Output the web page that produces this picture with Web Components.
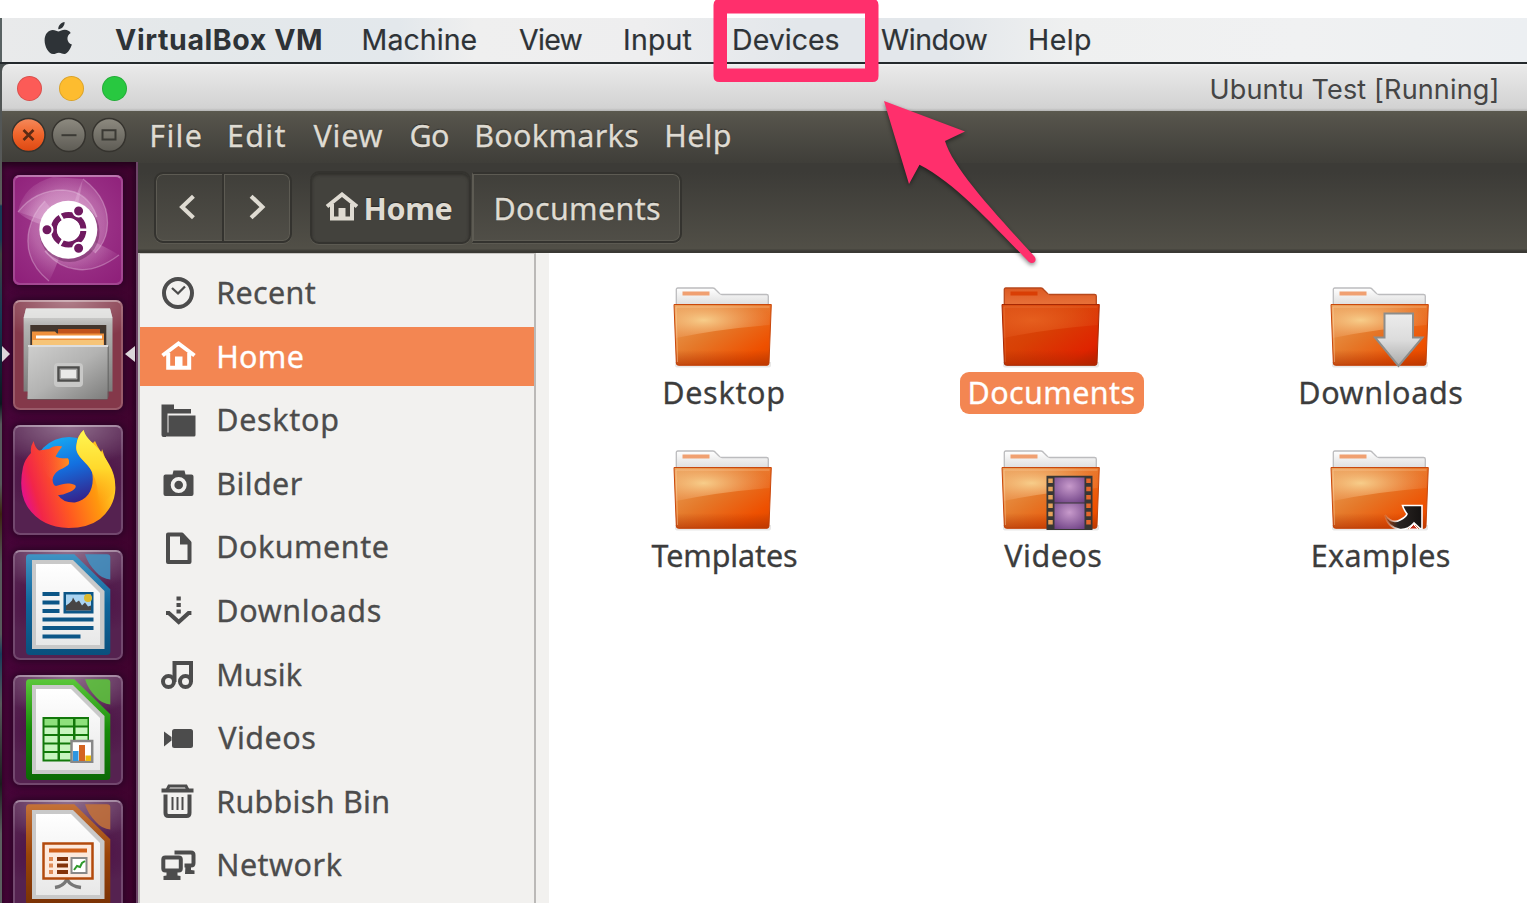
<!DOCTYPE html>
<html lang="en">
<head>
<meta charset="utf-8">
<title>Ubuntu Test [Running]</title>
<style>
html,body{margin:0;height:100%;overflow:hidden;background:#fff}
</style>
</head>
<body>
<desktop-screen></desktop-screen>
<script>
const define = (name, html, setup) => customElements.define(name, class extends HTMLElement {
  connectedCallback() {
    if (this.shadowRoot) return;
    const root = this.attachShadow({ mode: 'open' });
    const t = document.createElement('template');
    t.innerHTML = typeof html === 'function' ? html(this) : html;
    root.appendChild(t.content.cloneNode(true));
    if (setup) setup(this, root);
  }
});

/* A one-line label whose box is exactly its ink width; w gives that width. */
const ctx = document.createElement('canvas').getContext('2d');
define('fit-text', `<style>:host{display:block;flex:none;white-space:nowrap}span{display:block}</style><span><slot></slot></span>`, (el, root) => {
  const cs = getComputedStyle(el), text = el.textContent, w = +el.getAttribute('w');
  ctx.font = `${cs.fontWeight} ${cs.fontSize} ${cs.fontFamily}`;
  const m = ctx.measureText(text);
  const ink = m.actualBoundingBoxLeft + m.actualBoundingBoxRight;
  el.style.width = w + 'px';
  const s = root.querySelector('span').style;
  s.letterSpacing = ((w - ink) / (text.length - 1)) + 'px';
  s.marginLeft = m.actualBoundingBoxLeft + 'px';
});

define('mac-menu-bar', `<style>
:host{display:flex;align-items:center;height:44px;box-sizing:border-box;padding:0 0 1px 42px;gap:42.500px;
 background:linear-gradient(90deg,#e9eaeb 0,#e4e8ea 12%,#e3e8ec 26%,#efefef 31%,#eeeeef 42%,#e3e7eb 52%,#e3e7eb 62%,#eff0f0 70%,#f0f1f2 85%,#eceff2 100%);
 color:#2e3337;font:28.5px/43px Inter,sans-serif;-webkit-text-stroke:.2px #2e3337}
svg{width:29px;height:34px;margin:-2px -.400px 0 0;flex:none}
b{font-weight:700;-webkit-text-stroke:0}
</style>
<svg viewBox="0 0 29 34"><path fill="#2e3337" d="M20.600 0c.3 3.700-2.900 7.400-6.300 7.200C13.900 3.800 17.200.4 20.600 0ZM14.700 9.400C16.300 9.400 18.200 7.700 20.900 7.800c2.600.1 4.600 1.300 5.800 3.100-4.900 3-4.100 9.600 1.200 11.700-1.400 4-4.300 9.300-7.400 9.400-2.200.1-2.900-1.300-5.600-1.300-2.700 0-3.500 1.300-5.600 1.400C4.700 32.300.6 24.700.6 18.300c0-6.700 4.200-10.200 8.100-10.300 2.500 0 4.500 1.400 6 1.400Z"/></svg>
<b><fit-text w="206">VirtualBox VM</fit-text></b><fit-text w="113">Machine</fit-text><fit-text w="63.500">View</fit-text><fit-text w="66.500">Input</fit-text><fit-text w="104.500">Devices</fit-text><fit-text w="106.500">Window</fit-text><fit-text w="60">Help</fit-text>`);

define('mac-title-bar', `<style>
:host{display:flex;align-items:center;height:47px;box-sizing:border-box;padding:0 30.5px 0 15px;border-radius:7px 0 0 0;
 background:linear-gradient(#f3f3f3 0,#e9e9e9 6%,#d2d2d2 94%,#b5b5b5 100%);font:27px/47px Inter,sans-serif;color:#454545}
i{width:25px;height:25px;border-radius:50%;box-sizing:border-box;margin:1px 17.400px 0 0;border:1px solid #0002}
fit-text{margin-left:auto;padding-top:3px}
</style><i style="background:#fc5b57"></i><i style="background:#fdbc2f"></i><i style="background:#28c840"></i><fit-text w="285">Ubuntu Test [Running]</fit-text>`);

define('app-menu-bar', `<style>
:host{display:flex;align-items:center;height:52px;box-sizing:border-box;padding:0 0 3px 10px;gap:28.100px;
 background:linear-gradient(#5b594e 0,#54524a 15%,#3f3e39 100%);font:30.5px/49px "Noto Sans",sans-serif;color:#dfdbd2;-webkit-text-stroke:.3px;text-shadow:0 -1px 1px #2a2925}
svg{width:118px;height:36px;flex:none;margin:-1px -6.800px 0 0}
</style>
<svg viewBox="0 0 118 36"><defs><linearGradient id="o" x2="0" y2="1"><stop stop-color="#f58a5c"/><stop offset=".5" stop-color="#f0642a"/><stop offset="1" stop-color="#dd4812"/></linearGradient><linearGradient id="g" x2="0" y2="1"><stop stop-color="#8d8a80"/><stop offset="1" stop-color="#5d5b54"/></linearGradient></defs>
<g stroke="#35332e" stroke-width="1.500"><circle cx="16.500" cy="18" r="16.500" fill="url(#o)"/><circle cx="56.800" cy="18" r="16.500" fill="url(#g)"/><circle cx="97.100" cy="18" r="16.500" fill="url(#g)"/></g>
<g fill="none" stroke="#3b3a35" stroke-width="2"><path d="m11.500 13 10 10m0-10-10 10" stroke="#5c2a14" stroke-width="2.600"/><path d="M49.500 18.200h15"/><path d="M90.500 13.300h13v9.200h-13z"/></g></svg>
<fit-text w="49.500">File</fit-text><fit-text w="56.500">Edit</fit-text><fit-text w="69">View</fit-text><fit-text w="37.500">Go</fit-text><fit-text w="162">Bookmarks</fit-text><fit-text w="64.500">Help</fit-text>`);

define('nav-toolbar', `<style>
:host{display:flex;align-items:center;height:90px;box-sizing:border-box;padding:0 0 1px 16px;
 background:linear-gradient(#3c3b37 0,#3c3b37 10%,#514f47 95%,#3a3934 98%);
 font:30.5px/70px "Noto Sans",sans-serif;color:#dfdbd2;text-shadow:0 -1px 1px #2a2925}
.b{display:flex;height:71px;box-sizing:border-box;border:2px solid #34332f;border-radius:9px;background:linear-gradient(#403f3a,#504e47);box-shadow:inset 0 0 0 1px #5d5b53,0 1px 0 #5c5a52}
.nav{width:138px;margin-right:17.5px}
.nav svg{flex:1;width:67px;height:67px}.nav svg+svg{border-left:2px solid #34332f;box-shadow:inset 1px 0 #5d5b53}
.home{width:161px;height:73px;align-items:center;gap:6.500px;padding-left:13.500px;background:#43423d;box-shadow:inset 0 2px 3px #302f2b,0 1px 0 #5c5a52;font-weight:700}
.home svg{width:34px;height:29px;margin-top:-3px}
.doc{width:210px;margin-left:1px;padding-left:23px;border-left:1px solid #5d5b53;border-radius:0 9px 9px 0;-webkit-text-stroke:.3px}
fit-text{line-height:68px}.home fit-text{line-height:70px}
</style>
<div class="b nav"><svg viewBox="0 0 67 67"><path d="M38 22 26.500 33 38 44" fill="none" stroke="#dfdbd2" stroke-width="4.200"/></svg><svg viewBox="0 0 67 67"><path d="m27.500 22 11.500 11-11.500 11" fill="none" stroke="#dfdbd2" stroke-width="4.200"/></svg></div>
<div class="b home"><svg viewBox="0 0 34 29"><path d="M2 14.500 17 2.500l15 12M7 12v14.500h20V12" fill="none" stroke="#dfdbd2" stroke-width="4"/><path fill="#dfdbd2" d="M13.500 16h7v11h-7z"/></svg><fit-text w="86">Home</fit-text></div>
<div class="b doc"><fit-text w="164.500">Documents</fit-text></div>`);

/* Launcher */
const office = (c1, c2, c3, body) => `<defs><linearGradient id="f" x2="0" y2="1"><stop stop-color="${c1}"/><stop offset=".5" stop-color="${c2}"/><stop offset="1" stop-color="${c3}"/></linearGradient><linearGradient id="p" x2="0" y2="1"><stop stop-color="#fff"/><stop offset="1" stop-color="#e8e8e8"/></linearGradient></defs>
<path fill="url(#f)" d="M16 4.300h45.300l36 35V102q0 3-4 3H17q-4 0-4-4V8q0-3.700 3-3.700Z"/><path fill="${c1}" opacity=".85" d="M72 4.300h22q3.300 0 3.300 3V29.500Q89 29 83 22 75 14 72 4.300Z"/>
<path fill="#c9c9c9" d="M19 10h41l31.500 31v58H19z"/><path fill="url(#p)" d="M23 14h35l29 29v52H23z"/>${body}`;
const ART = {
dash: `<defs><radialGradient id="a" cx=".5" cy=".45" r=".75"><stop stop-color="#a8408f"/><stop offset=".55" stop-color="#972d83"/><stop offset="1" stop-color="#8d1d78"/></radialGradient><radialGradient id="s" gradientUnits="userSpaceOnUse" cx="55" cy="50" r="60"><stop stop-color="#e9c3e2" stop-opacity=".6"/><stop offset=".6" stop-color="#e2b0d8" stop-opacity=".38"/><stop offset="1" stop-color="#d79aca" stop-opacity=".05"/></radialGradient></defs>
<rect width="110" height="110" rx="6" fill="url(#a)"/>
<g fill="url(#s)"><path d="M5 37Q22 15 50 15 75 16 84 42L55 55Q18 50 5 37Z"/><path d="M70 4Q98 25 94 55 92 68 82 78L55 55Q62 20 70 4Z"/><path d="M106 80Q82 98 62 94 45 92 32 76L55 55Q90 70 106 80Z"/><path d="M36 106Q10 85 16 55 20 38 32 26L55 55Q45 90 36 106Z"/><path d="M5 37Q10 10 40 2L70 4 60 55Z"/></g>
<g fill="none" stroke="#efd0e9" stroke-opacity=".35" stroke-width="1.300"><path d="M5 37Q22 15 50 15 75 16 84 42"/><path d="M70 4Q98 25 94 55 92 68 82 78"/><path d="M106 80Q82 98 62 94 45 92 32 76"/><path d="M36 106Q10 85 16 55 20 38 32 26"/></g>
<circle cx="56.500" cy="57" r="30" fill="#4b0c40" opacity=".35"/><circle cx="55.300" cy="54.700" r="29" fill="#fff"/>
<circle cx="55.600" cy="54.700" r="14.800" fill="none" stroke="#701a60" stroke-width="6"/>
<g stroke="#fff" stroke-width="2.500"><path d="M55.600 54.700H76M55.600 54.700 45 36.400M55.600 54.700 45 73"/></g><circle cx="55.600" cy="54.700" r="11.500" fill="#fff"/>
<g fill="#701a60" stroke="#fff" stroke-width="2"><circle cx="34" cy="54.700" r="5.500"/><circle cx="65.600" cy="36" r="5.500"/><circle cx="65.600" cy="73.300" r="5.500"/></g>`,
files: `<defs><linearGradient id="b" x2="0" y2="1"><stop stop-color="#e0e0df"/><stop offset=".2" stop-color="#b4b4b3"/><stop offset="1" stop-color="#7c7c7b"/></linearGradient><linearGradient id="d" x2="1" y2="1"><stop stop-color="#cfcfce"/><stop offset=".5" stop-color="#b3b3b2"/><stop offset="1" stop-color="#7d7d7c"/></linearGradient></defs>
<path fill="url(#b)" d="M13 8.500h84l2.500 9v74H10.600v-74z"/><path fill="#e6e6e5" opacity=".8" d="M13 8.500h84l2.300 9.500H10.800z"/>
<path fill="#42362e" d="M17.300 25h76v21h-76z"/><path fill="#c1531c" d="M45 29h42v16H45z"/><path fill="#f0913d" d="M19 31.500h23l2 2h47v12H19z"/><path fill="#fff" d="M23 35.500h66v3H23z"/><path fill="#f6c478" d="M19.500 40h71v6h-71z"/>
<path fill="#5d5d5c" d="M96 46v50l-2 4H15l-2-3z" opacity=".6"/><path fill="url(#d)" d="M15.500 45h79v54h-80z"/><path stroke="#dedede" stroke-width="2" d="M15 46h80"/>
<rect x="41" y="63" width="29" height="24" rx="4" fill="#c8c8c7"/><rect x="45.500" y="67.500" width="20" height="13" fill="#e9e9e8" stroke="#4d4d4c" stroke-width="2.500"/><rect x="47.500" y="69.500" width="16" height="9" fill="none" stroke="#a9a9a8" stroke-width="1"/>`,
firefox: `<defs><linearGradient id="bl" x2=".3" y2="1"><stop stop-color="#18b5f5"/><stop offset=".5" stop-color="#1370e0"/><stop offset="1" stop-color="#35218a"/></linearGradient><linearGradient id="fx" x1="0" y1=".65" x2="1" y2=".35"><stop stop-color="#e3108f"/><stop offset=".14" stop-color="#f22648"/><stop offset=".42" stop-color="#ff5a20"/><stop offset=".72" stop-color="#ff980e"/><stop offset="1" stop-color="#ffe32e"/></linearGradient><linearGradient id="yl" x2="0" y2="1"><stop stop-color="#fff652"/><stop offset=".5" stop-color="#ffd92c"/><stop offset="1" stop-color="#ff9a10" stop-opacity="0"/></linearGradient><linearGradient id="fc" x2="1"><stop stop-color="#f5334b" stop-opacity="0"/><stop offset="1" stop-color="#ff9020"/></linearGradient></defs>
<circle cx="56" cy="48" r="36" fill="url(#bl)"/>
<path fill="url(#fx)" d="M20.600 16Q22 23 26 25.500L36 24q5-4 13-2.500-4 5-6.500 10 4 2.500 12.500 2 2 4 0 6.500-4 3-9 5-6 4-6.500 9.500Q40 61 43 61c8-2 11-4 19-1 3 3-4 7-8 8q-5 2.500-9 2Q50 78 62 77.500C76 75 82 62 79 47 76 38 62 32 63.300 21Q64 11 70.600 5 72 14 80 18l2-2q2 5 6 11 1-1 1-3 2 7 6 15 9 14 7 29-2 15-15 26Q75 103 55.600 103 27 102 14 81 5 66 10 42q2-8 8-14-1-6 2.600-12Z"/>
<path fill="url(#yl)" d="M70.600 5C73 14 81 18 88 27 98 41 105 52 101 68L86 82Q86 60 79 47C76 38 62 32 63.300 21Q64 11 70.600 5Z"/>
<path fill="url(#fc)" d="M26 25.500 36 24q5-4 13-2.500-4 5-6.500 10 4 2.500 12.500 2 2 4 0 6.500-4 3-9 5-6 4-6.500 9.500Q30 50 26 25.500Z"/>`,
writer: office('#3f94c4', '#0f659b', '#0a507d', `<g fill="#0c5687"><path d="M29.500 42h17v4h-17zm0 8.500h17v4h-17zm0 8.500h17v4h-17zm0 8.500h51v4h-51zm0 8.500h51v4h-51zm0 8.500h38v4h-38zM50.500 42h30v21.500h-30z"/></g><path fill="#a9d4f2" d="M53 44.500h25v16H53z"/><circle cx="75" cy="48" r="4" fill="#dcb92d"/><path fill="#474544" d="M53 60.500v-5l3-2 3-3 1-3 3 5 3-2 3 5 3-3 3 4 3-1v5z"/>`),
calc: office('#5bc83a', '#178b0a', '#0b6905', `<path fill="#12780a" d="M29.500 42H76v44.500H29.500z"/><path fill="#8ee07c" d="M31.500 44h13v6.500h-13zm15.500 0h13v6.500H47zm15.500 0h12v6.500h-12z"/><path fill="#c8f5bf" d="M31.500 52.500h13V59h-13zm15.500 0h13V59H47zm15.500 0h12V59h-12zM31.500 61h13v6.500h-13zM47 61h13v6.500H47zm15.500 0h12v6.500h-12zM31.500 69.500h13V76h-13zm15.500 0h13V76H47zM31.500 78h13v6.500h-13zM47 78h13v6.500H47z"/><path fill="#fff" stroke="#888" stroke-width="2.500" d="M58.500 66h20.700v20.700H58.500z"/><path fill="#2f96e0" d="M60 76h5.500v10H60z"/><path fill="#d36422" d="M66 70h6v16h-6z"/><path fill="#edb90e" d="M72.500 80.500h5.500V86h-5.500z"/>`),
impress: office('#c47238', '#9a4408', '#7a3205', `<g fill="none" stroke="#777" stroke-width="3.500"><path d="M42 87.500q8-1 12-8 4 7 14 8"/></g><path fill="#fde9dc" stroke="#b24a0c" stroke-width="2.500" d="M30.500 43.500h49v35h-49z"/><path fill="#d0601a" d="M36 48.500h38v4H36z"/><path fill="#e08a55" d="M36 57h4v4h-4zm0 6.500h4v4h-4zm0 6.500h4v4h-4z"/><path fill="#83330a" d="M44 57h11v4H44zm0 6.500h11v4H44zm0 6.500h11v4H44z"/><path fill="#fff" stroke="#888" stroke-width="2" d="M58.500 58h15v15h-15z"/><path fill="none" stroke="#2f9a2b" stroke-width="2" d="m61 70 3-4 3 1 2-4 3-2"/>`)
};
define('launcher-tile', el => {
  const k = el.getAttribute('art'), bg = k === 'files' ? '#84384a' : k === 'dash' ? '#96308a' : '#552250';
  return `<style>:host{display:block;flex:none;width:110px;height:110px;border-radius:7px;position:relative;background:${bg};box-shadow:0 0 7px 2px #2a0425}
svg{display:block;width:110px;height:110px}
:host::before{content:"";position:absolute;inset:0;border-radius:7px;background:radial-gradient(ellipse 80px 42px at 50% 0,#ffffff5c,#fff0)${k === 'dash' || k === 'files' ? '' : ',radial-gradient(ellipse 75px 34px at 50% 48%,#4a0c42,#4a0c4200)'}}
:host::after{content:"";position:absolute;inset:0;border-radius:7px;border:2px solid #ffffff2c;border-top-color:#ffffff60;box-sizing:border-box}
svg{position:relative}
.m{position:absolute;top:46px;border:8px solid transparent}.l{left:-11px;border-left-color:#dcd6da;border-right:0}.r{right:-12px;border-right:10px solid #dcd6da;border-left:0}
</style><svg viewBox="0 0 110 110">${ART[k]}</svg>${k === 'files' ? '<span class="m l"></span><span class="m r"></span>' : ''}`;
});
define('unity-launcher', `<style>:host{display:flex;flex-direction:column;gap:15px;width:136px;height:741px;overflow:hidden;box-sizing:border-box;padding:13px 0 0 11px;border-right:2px solid #6d4568;background:linear-gradient(90deg,#470539,#40042f 96%,#37032c);box-shadow:inset 0 4px 6px #23021c}</style>
${['dash','files','firefox','writer','calc','impress'].map(a => `<launcher-tile art="${a}"></launcher-tile>`).join('')}`);

/* Sidebar */
const SIDE = {
recent: '<circle cx="17" cy="17" r="14" fill="none" stroke="currentColor" stroke-width="4"/><path fill="none" stroke="currentColor" stroke-width="2.300" d="m11 12 6 5.500 7-7"/>',
home: '<path d="M1.500 14.500 17.500 2.500l16 12M7.200 12v14.700h21V12" fill="none" stroke="currentColor" stroke-width="4"/><path fill="currentColor" d="M14 15.500h7.500V28H14z"/>',
desktop: '<path fill="currentColor" d="M.5 1.500h12.500V6h17v4.500H6.500V30H5V34H2.500Q.5 34 .5 32z"/><path fill="currentColor" d="M7.500 12.500h27V32q0 1.500-1.500 1.500H3v-4h4.500z"/>',
bilder: '<path fill="currentColor" fill-rule="evenodd" d="M4.500 8.500h7l1-4h11l1 4h6q2 0 2 2V28q0 2-2 2h-26q-2 0-2-2V10.500q0-2 2-2ZM17.700 11a8 8 0 1 0 0 16 8 8 0 0 0 0-16Z"/><circle cx="17.700" cy="19" r="4.300" fill="currentColor"/>',
dokumente: '<path fill="none" stroke="currentColor" stroke-width="4" stroke-linejoin="round" d="M7 4.500h14l7.500 8V32H7z"/><path fill="currentColor" d="M19 4.500h3l7.500 8v2H19z"/>',
downloads: '<path fill="currentColor" d="M15.500 2.500h4.300v4h-4.300zm0 6.500h4.300v4h-4.300zm0 6.500h4.300v4h-4.300z"/><path fill="none" stroke="currentColor" stroke-width="4.200" d="M5 19h2.800l9.900 9 9.900-9h2.800"/>',
musik: '<g fill="none" stroke="currentColor" stroke-width="4"><circle cx="7.500" cy="24.500" r="5.500"/><circle cx="24.500" cy="24.500" r="5.500"/><path d="M13.500 25V6H30v19"/></g>',
videos: '<path fill="currentColor" d="M3 10.500 10.500 16v3.500L3 25.500z"/><rect x="11" y="8" width="21" height="19" rx="2.500" fill="currentColor"/>',
bin: '<path fill="none" stroke="currentColor" stroke-width="4" d="M.5 6.500h32"/><path fill="none" stroke="currentColor" stroke-width="3" d="M6 6l2-4h17l2 4"/><path fill="none" stroke="currentColor" stroke-width="4" d="M4.500 10.500V29q0 3 3 3h18q3 0 3-3V10.500"/><path stroke="currentColor" stroke-width="2" d="M11.500 13v13m5-13v13m5-13v13"/>',
network: '<rect x="2.300" y="9.500" width="17.500" height="13" rx="2" fill="none" stroke="currentColor" stroke-width="4"/><path fill="currentColor" d="M5.500 24h11v3.500l3 .5v4h-17v-4l3-.5zM24.500 17H30v5l3.500.5V26H24z"/><path fill="none" stroke="currentColor" stroke-width="4" d="M13.500 4.500H30q2.500 0 2.500 2.500v8q0 2.500-2.500 2.500h-6.500"/>'
};
define('place-row', el => `<style>:host{display:flex;align-items:center;box-sizing:border-box;height:59px;margin-bottom:4.600px;padding:0 0 0 20.500px;gap:22.700px;color:#4c4c4c;line-height:58px;-webkit-text-stroke:.3px}
:host([selected]){background:#f38652;color:#fff}svg{width:35px;height:35px;flex:none;-webkit-text-stroke:0;margin-bottom:${el.getAttribute('icon') === 'home' ? -4 : 0}px}div{margin-top:-2.400px}</style><svg viewBox="0 0 35 35">${SIDE[el.getAttribute('icon')]}</svg><div><slot></slot></div>`);
define('places-sidebar', `<style>:host{display:block;width:398px;height:650px;overflow:hidden;box-sizing:border-box;padding-top:9.700px;background:#f2f1ef;border-left:2px solid #bdb9b8;border-right:2px solid #bbb9b7;border-top:1px solid #c8c6c3;font:30.5px "Noto Sans",sans-serif}</style>
${[['recent','Recent',97.5],['home','Home',84.5],['desktop','Desktop',120],['bilder','Bilder',84.5],['dokumente','Dokumente',169.5],['downloads','Downloads',162.5],['musik','Musik',84.5],['videos','Videos',97],['bin','Rubbish Bin',170],['network','Network',124.5]].map(([i, t, w]) => `<place-row icon="${i}"${i === 'home' ? ' selected' : ''}><fit-text w="${w}">${t}</fit-text></place-row>`).join('')}`);

/* Folder grid */
const EMBLEM = {
down: '<defs><linearGradient id="dn" x2="0" y2="1"><stop stop-color="#ececec"/><stop offset=".5" stop-color="#dcdcdc"/><stop offset="1" stop-color="#aaa"/></linearGradient></defs><path fill="url(#dn)" stroke="#8d8d8b" stroke-width="2" d="M54.500 27.500h28.500V51.500h9.500L68.500 80 45 51.500h9.500z"/>',
film: '<defs><radialGradient id="fm" cx=".5" cy=".35" r=".8"><stop stop-color="#c79acb"/><stop offset="1" stop-color="#6c3f83"/></radialGradient></defs><path fill="#383735" d="M45.500 26.700h46V81h-46z"/><path fill="url(#fm)" d="M53.500 28.500h30v25h-30z"/><path fill="url(#fm)" d="M53.500 54.500h30V80h-30z"/><path stroke="#e5a35c" stroke-width="4.500" stroke-dasharray="4.500 3.800" d="M49.500 29.500V79"/><path stroke="#e4672c" stroke-width="4.500" stroke-dasharray="4.500 3.800" d="M87.500 29.500V79"/>',
link: '<defs><linearGradient id="lk"><stop stop-color="#2a2523" stop-opacity=".2"/><stop offset=".35" stop-color="#2a2523"/><stop offset="1" stop-color="#151211"/></linearGradient><linearGradient id="lw"><stop stop-color="#fff" stop-opacity=".1"/><stop offset=".4" stop-color="#fff"/></linearGradient></defs><path fill="url(#lk)" stroke="url(#lw)" stroke-width="1.600" d="M72.500 56.500H92V79.500H90L84 74Q78 81 70 80.500 57 78 55 66 62 75.500 70 71 76 68 77 65 74 61 72.500 56.500Z"/><path fill="#c52d16" stroke="#fff" d="m79 80 4.500-4.500L88 80z"/>'
};
define('folder-item', el => {
  const sel = el.hasAttribute('selected'), e = el.getAttribute('emblem');
  return `<style>:host{display:flex;flex-direction:column;align-items:center;color:#3c3c3c;line-height:40.500px;-webkit-text-stroke:.3px}svg{display:block;width:100px;height:82px;-webkit-text-stroke:0}
.n{margin:4px 0 0 3px;height:42px;box-sizing:border-box;padding:0 9.500px;border-radius:9px}:host([selected]) .n{background:#f38652;color:#fff;margin-left:1.500px}</style>
<svg viewBox="0 0 100 82"><defs><linearGradient id="m" x2="1" y2=".9"><stop stop-color="${sel ? '#d94f12' : '#e8a45c'}"/><stop offset=".45" stop-color="${sel ? '#d84005' : '#e5792a'}"/><stop offset=".85" stop-color="${sel ? '#df2400' : '#ee5000'}"/><stop offset="1" stop-color="${sel ? '#c51e00' : '#de4a00'}"/></linearGradient><radialGradient id="h" cx=".3" cy=".45" r=".7"><stop stop-color="${sel ? '#e6601f' : '#f8d18e'}" stop-opacity=".95"/><stop offset="1" stop-color="${sel ? '#e55a20' : '#f09a60'}" stop-opacity=".2"/></radialGradient><linearGradient id="t" x2="0" y2="1"><stop stop-color="${sel ? '#dd5a22' : '#fff'}"/><stop offset="1" stop-color="${sel ? '#e8733c' : '#dcdcdc'}"/></linearGradient><linearGradient id="bt" x2="0" y2="1"><stop offset=".75" stop-color="#a62a00" stop-opacity="0"/><stop offset="1" stop-color="#a62a00" stop-opacity=".55"/></linearGradient></defs>
<path fill="#00000018" d="M2 76h96v3.500q0 2-3 2H5q-3 0-3-2z"/>
<path fill="url(#t)" stroke="${sel ? '#b8481c' : '#bcbcbe'}" stroke-width="1.300" d="M3.300 20V3.500q0-1.500 1.500-1.500H40q1.500 0 3 2l3 3q1 1.500 3 1.500h44.500q1.800 0 1.800 1.500V20z"/>
<path stroke="${sel ? '#d93e05' : '#f0a071'}" stroke-width="4" d="M9.500 7.500h27"/>
<path fill="url(#m)" stroke="${sel ? '#a72803' : '#c9480c'}" d="M1 18.500h97.300L96 77q0 2.300-2 2.300H5.500Q3.300 79.300 3.300 77z"/>
<path fill="url(#h)" d="M2 19.500h95.300L96.500 39Q45 43 3 52z"/><path fill="url(#bt)" d="M1 18.500h97.300L96 77q0 2.300-2 2.300H5.500Q3.300 79.300 3.300 77z"/><path fill="none" stroke="#ffd5ab" stroke-opacity="${sel ? .15 : .45}" d="m4.500 76-1.500-55h93.500"/>${e ? EMBLEM[e] : ''}</svg><div class="n"><slot></slot></div>`;
});
define('folder-view', `<style>:host{display:grid;flex:1;box-sizing:border-box;height:650px;border-left:13px solid #f2f1ef;padding:33px 0 0 9.500px;grid-template-columns:repeat(3,328.500px);grid-auto-rows:163px;align-content:start;background:#fff;font:30.5px "Noto Sans",sans-serif;overflow:hidden}</style>
<folder-item><fit-text w="120">Desktop</fit-text></folder-item><folder-item selected><fit-text w="165">Documents</fit-text></folder-item><folder-item emblem="down"><fit-text w="162">Downloads</fit-text></folder-item>
<folder-item><fit-text w="145.500">Templates</fit-text></folder-item><folder-item emblem="film"><fit-text w="97">Videos</fit-text></folder-item><folder-item emblem="link"><fit-text w="137">Examples</fit-text></folder-item>`);

/* Pink frame and arrow laid over the page */
define('callout-marks', `<style>:host{position:absolute;inset:0;pointer-events:none}svg{display:block;width:1527px;height:903px}</style>
<svg viewBox="0 0 1527 903"><path fill="#ff2f6c" fill-rule="evenodd" d="M719.500-1H872.500q6 0 6 6V76q0 6-6 6H719.500q-6 0-6-6V5q0-6 6-6ZM727 13.500V68.500H865V13.500Z"/>
<path style="filter:drop-shadow(0 2px 2px #0007)" fill="#ff2f6c" d="M884 101 965 131.500 945 141C953 168 993 211 1034.500 256.500 1038 261 1032.500 266 1028 261 990 222 955 183 919.500 164.700L909 184Z"/></svg>`);

define('desktop-screen', `<style>
:host{display:flex;flex-direction:column;position:relative;width:1527px;height:903px;overflow:hidden;background:#fff;padding-top:18px;box-sizing:border-box}
.win{display:flex;flex-direction:column;border-top:2px solid #24292c;flex:none;padding-left:2px;background:linear-gradient(#4d5353 0,#5b5b5a 140px,#173a55 142px,#173a55 175px,#3f4240 190px,#173a55 250px,#0b171e 340px,#57595b 360px,#57595b 420px,#3b2411 450px,#57595b 500px,#57595b 570px,#183d5b 590px,#57595b 640px,#1a1c1d 720px,#5c5e5f 770px) no-repeat #5c5e5f}
.row{display:flex}.main{flex:1;min-width:0}.files{display:flex}
unity-launcher{margin-top:-1px}
mac-menu-bar{border-left:2px solid #596263}
</style>
<mac-menu-bar></mac-menu-bar>
<div class="win"><mac-title-bar></mac-title-bar><app-menu-bar></app-menu-bar>
<div class="row"><unity-launcher></unity-launcher><div class="main"><nav-toolbar></nav-toolbar><div class="files"><places-sidebar></places-sidebar><folder-view></folder-view></div></div></div></div>
<callout-marks></callout-marks>`);
</script>
</body>
</html>
